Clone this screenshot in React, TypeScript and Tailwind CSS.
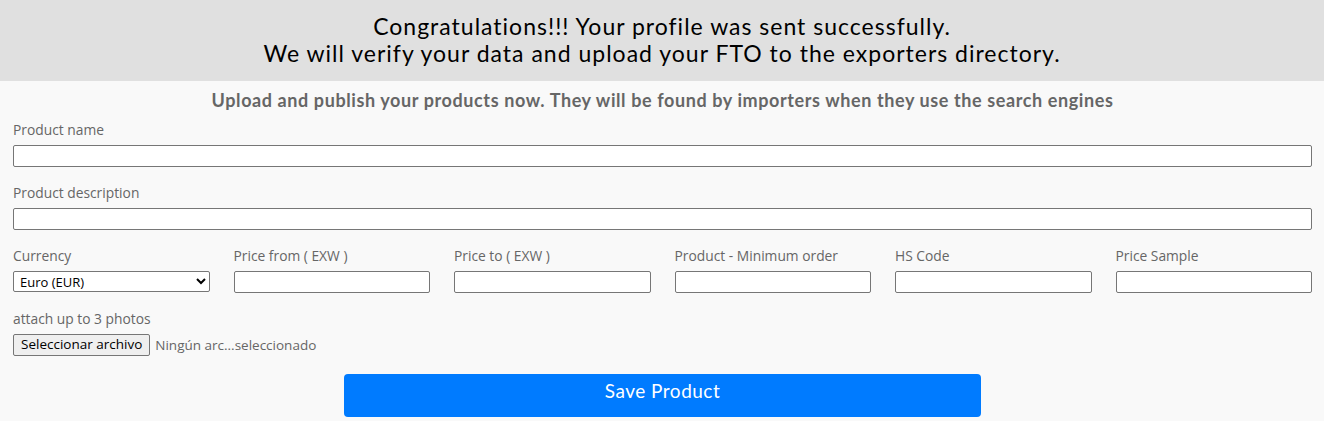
import React from 'react';

const labelCls = "block text-[13.8px] leading-[16px] text-[#666] mb-[7px]";
const inputCls = "block w-full h-[22px] bg-white border border-[#767676] rounded-[2px] px-1 text-[13px]";

const Field: React.FC<{ label: string; children?: React.ReactNode }> = ({ label, children }) => (
    <div>
        <label className={labelCls}>{label}</label>
        {children ?? <input type="text" className={inputCls} />}
    </div>
);

const App: React.FC = () => {
    return (
        <div className="w-[1324px] h-[421px] bg-[#f9f9f9] overflow-hidden" style={{ fontFamily: '"Open Sans", "Noto Sans", sans-serif' }}>
            <div className="h-[81px] bg-[#e0e0e0] flex flex-col items-center justify-center text-black text-[23px] leading-[27px] tracking-[1px] pb-[1px]" style={{ fontFamily: 'Lato, "Noto Sans", sans-serif' }}>
                <p>Congratulations!!! Your profile was sent successfully.</p>
                <p>We will verify your data and upload your FTO to the exporters directory.</p>
            </div>

            <div className="px-[13px] pr-[12px]">
                <h2 className="text-center text-[18px] font-bold text-[#666] leading-[20px] tracking-[0.6px] mt-[9px] mb-[12px]" style={{ fontFamily: 'Lato, "Noto Sans", sans-serif' }}>
                    Upload and publish your products now. They will be found by importers when they use the search engines
                </h2>

                <div className="mb-[18px]">
                    <Field label="Product name" />
                </div>
                <div className="mb-[18px]">
                    <Field label="Product description" />
                </div>

                <div className="grid grid-cols-6 gap-x-6 mb-[18px]">
                    <Field label="Currency">
                        <select className="block w-full h-[21px] bg-white border border-[#767676] rounded-[2px] text-[13px] pl-[2px] text-black">
                            <option>Euro (EUR)</option>
                        </select>
                    </Field>
                    <Field label="Price from ( EXW )" />
                    <Field label="Price to ( EXW )" />
                    <Field label="Product - Minimum order" />
                    <Field label="HS Code" />
                    <Field label="Price Sample" />
                </div>

                <div>
                    <label className={labelCls}>attach up to 3 photos</label>
                    <div className="flex items-center gap-[5px] text-[13.5px]">
                        <button className="h-[22px] px-[7px] bg-[#efefef] border border-[#767676] rounded-[2px] text-black leading-none">
                            Seleccionar archivo
                        </button>
                        <span className="text-[#666]">Ningún arc...seleccionado</span>
                    </div>
                </div>

                <div className="flex justify-center mt-[18px]">
                    <button className="w-[637px] h-[43px] bg-[#007bff] text-white rounded-[4px] text-[19px] tracking-[0.5px] pb-[9px]" style={{ fontFamily: 'Lato, "Noto Sans", sans-serif' }}>
                        Save Product
                    </button>
                </div>
            </div>
        </div>
    );
};

export default App;
